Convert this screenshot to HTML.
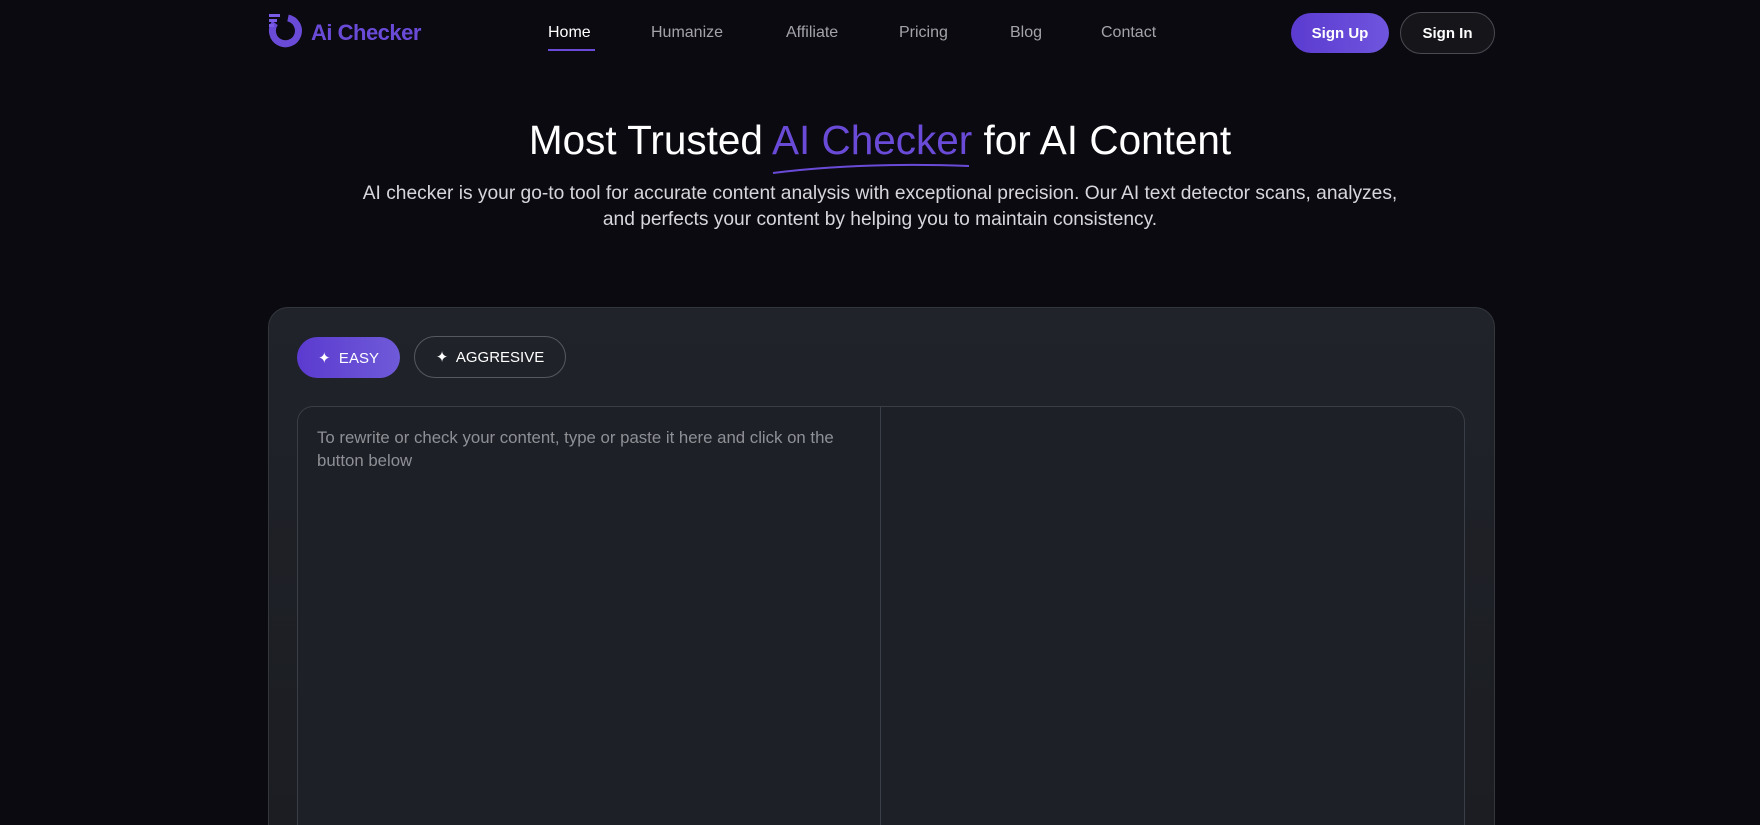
<!DOCTYPE html>
<html><head><meta charset="utf-8"><style>
*{margin:0;padding:0;box-sizing:border-box}
html,body{width:1760px;height:825px;overflow:hidden}
body{background:#0b0a10;font-family:"Liberation Sans",sans-serif;color:#fff;position:relative}
.a{position:absolute;white-space:nowrap}
.nav{font-size:16px;color:#a3a3ab;top:24px}
.btn{position:absolute;border-radius:22px;display:flex;align-items:center;justify-content:center;font-size:15px;font-weight:bold}
#clip{position:absolute;left:0;top:0;width:1760px;height:825px;overflow:hidden}
</style></head><body><div id="clip">
<svg class="a" style="left:267px;top:12px" width="36" height="38" viewBox="0 0 36 38">
<path d="M8 11 A13 13 0 1 0 21 6" fill="none" stroke="#6a4bd8" stroke-width="7"/>
<rect x="2" y="2" width="11" height="3" fill="#7a5ce6"/><rect x="2" y="7" width="8" height="3" fill="#7a5ce6"/><rect x="2" y="12" width="5" height="3" fill="#7a5ce6"/>
</svg>
<div class="a" style="left:311px;top:20px;font-size:22px;font-weight:bold;color:#6a4bd8;letter-spacing:-0.5px">Ai Checker</div>
<div class="a nav" style="left:548px;color:#fff">Home</div>
<div class="a" style="left:548px;top:49px;width:47px;height:2px;background:#6a4bd8"></div>
<div class="a nav" style="left:651px">Humanize</div>
<div class="a nav" style="left:786px">Affiliate</div>
<div class="a nav" style="left:899px">Pricing</div>
<div class="a nav" style="left:1010px">Blog</div>
<div class="a nav" style="left:1101px">Contact</div>
<div class="btn" style="left:1291px;top:13px;width:98px;height:40px;background:linear-gradient(90deg,#5b3bd0,#6f55de)">Sign Up</div>
<div class="btn" style="left:1400px;top:12px;width:95px;height:42px;background:#15151a;border:1px solid #4a4a52">Sign In</div>
<div class="a" style="left:0;width:1760px;text-align:center;top:117px;font-size:40.5px">Most Trusted <span style="color:#6a4bd8">AI Checker</span> for AI Content</div>
<svg class="a" style="left:770px;top:162px" width="202" height="14"><path d="M3 11 Q90 0 199 4" fill="none" stroke="#6a4bd8" stroke-width="2"/></svg>
<div class="a" style="left:0;width:1760px;text-align:center;top:181px;font-size:19.2px;line-height:26px;color:#d6d6dc;white-space:normal">AI checker is your go-to tool for accurate content analysis with exceptional precision. Our AI text detector scans, analyzes,<br>and perfects your content by helping you to maintain consistency.</div>
<div class="a" style="left:268px;top:307px;width:1227px;height:518px;border-radius:20px 20px 0 0;background:linear-gradient(180deg,#20232a,#1b1d22);border:1px solid #33363d;border-bottom:none"></div>
<div class="btn" style="left:297px;top:337px;width:103px;height:41px;background:linear-gradient(90deg,#5b3bd0,#6f5ad8);font-weight:normal;font-size:15px">✦&nbsp; EASY</div>
<div class="btn" style="left:414px;top:336px;width:152px;height:42px;border:1px solid #55585f;font-weight:normal;font-size:15px">✦&nbsp; AGGRESIVE</div>
<div class="a" style="left:297px;top:406px;width:1168px;height:419px;border-radius:16px 16px 0 0;border:1px solid #3a3e46;border-bottom:none;background:#1d2026"></div>
<div class="a" style="left:880px;top:407px;width:1px;height:418px;background:#3a3e46"></div>
<div class="a" style="left:317px;top:426px;font-size:16.8px;line-height:23px;color:#8e9096;white-space:normal;width:600px">To rewrite or check your content, type or paste it here and click on the<br>button below</div>
</div></body></html>
